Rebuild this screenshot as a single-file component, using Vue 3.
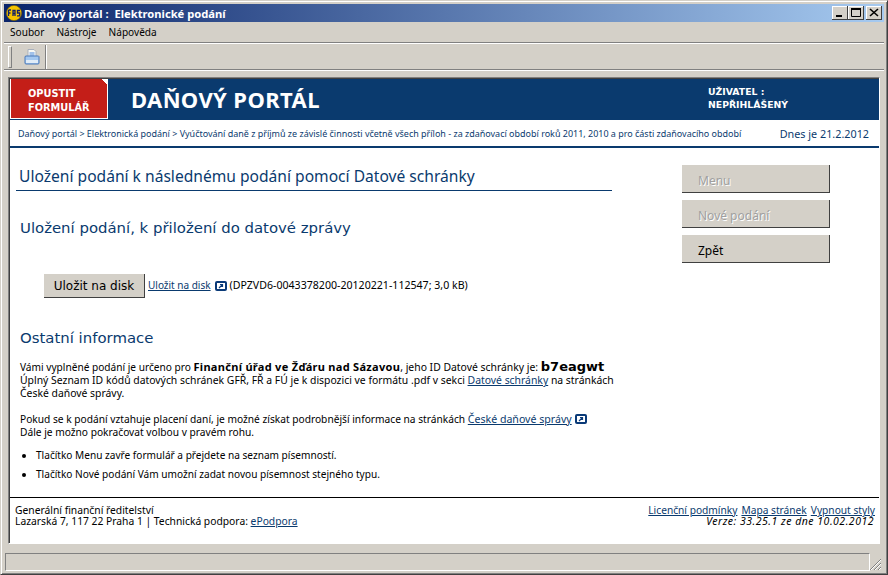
<script setup>
const crumbs = 'Daňový portál > Elektronická podání > Vyúčtování daně z příjmů ze závislé činnosti včetně všech příloh - za zdaňovací období roků 2011, 2010 a pro části zdaňovacího období'
</script>

<template>
  <div class="win">
    <div class="title">
      <div class="title-left">
        <svg class="logo" width="16" height="16" viewBox="0 0 16 16"><circle cx="8" cy="8" r="7.6" fill="#f5c400" stroke="#7a6000" stroke-width=".6"/><path d="M2.500 5v6M2.500 5H5M2.500 8H4.500M7 11V5.500L9 5.500V11M7 8.500H9M14 5.500H11.500V8H13.700V10.800H11" fill="none" stroke="#10206a" stroke-width="1.300"/></svg>
        <span>Daňový portál :&nbsp; Elektronické podání</span>
      </div>
      <div class="ctrls">
        <div class="cb"><svg width="14" height="12" viewBox="0 0 14 12"><rect x="3" y="8" width="6" height="2" fill="#000"/></svg></div>
        <div class="cb"><svg width="14" height="12" viewBox="0 0 14 12"><path d="M2.500 1.500h9v8h-9z" fill="none" stroke="#000"/><rect x="2" y="1" width="10" height="2" fill="#000"/></svg></div>
        <div class="cb close"><svg width="14" height="12" viewBox="0 0 14 12"><path d="M3 2l8 7M11 2l-8 7" stroke="#000" stroke-width="1.600"/></svg></div>
      </div>
    </div>
    <div class="menu"><span>Soubor</span><span>Nástroje</span><span>Nápověda</span></div>
    <div class="toolbar">
      <div class="grip"></div>
      <svg class="printer" width="16" height="16" viewBox="0 0 16 16"><path d="M4 .5h6l2 2v6H4z" fill="#f8f8f4" stroke="#a8b0bc"/><path d="M5.500 4h5M5.500 6h5" stroke="#4a8ae0"/><path d="M1.500 7h13a1 1 0 0 1 .5 1v6a1 1 0 0 1-1 1H2a1 1 0 0 1-1-1V8z" fill="#a4c8f0" stroke="#4a78b8"/><rect x="2" y="11" width="12" height="3" fill="#e0ecf8"/></svg>
      <div class="sep"></div>
    </div>
    <div class="frame">
      <div class="header">
        <div class="exit"><span>OPUSTIT</span><span>FORMULÁŘ</span></div>
        <div class="portal">DAŇOVÝ PORTÁL</div>
        <div class="user"><span>UŽIVATEL :</span><span>NEPŘIHLÁŠENÝ</span></div>
      </div>
      <div class="crumbs">
        <span class="crumb-text">{{ crumbs }}</span>
        <span class="date">Dnes je 21.2.2012</span>
      </div>
      <div class="main">
        <div class="col">
          <h1>Uložení podání k následnému podání pomocí Datové schránky</h1>
          <h2>Uložení podání, k přiložení do datové zprávy</h2>
          <div class="save-row">
            <div class="save-btn">Uložit na disk</div>
            <a class="lnk save-lnk">Uložit na disk</a>
            <svg class="ext" width="12" height="10" viewBox="0 0 12 10"><rect width="12" height="10" rx="2" fill="#0a3a78"/><rect x="2" y="2" width="8" height="6" fill="#fff"/><path d="M4 7l3-3M5 3.500h2.500V6" fill="none" stroke="#0a3a78" stroke-width="1.200"/></svg>
            <span class="fileinfo">(DPZVD6-0043378200-20120221-112547; 3,0 kB)</span>
          </div>
          <h2 class="other">Ostatní informace</h2>
          <p class="p1"><span class="lead">Vámi vyplněné podání je určeno pro </span><b class="office">Finanční úřad ve Žďáru nad Sázavou</b>, jeho ID Datové schránky je: <b class="idbox">b7eagwt</b><br>Úplný Seznam ID kódů datových schránek GFŘ, FŘ a FÚ je k dispozici ve formátu .pdf v sekci <a class="lnk">Datové schránky</a> na stránkách<br>České daňové správy.</p>
          <p class="p2">Pokud se k podání vztahuje placení daní, je možné získat podrobnější informace na stránkách <a class="lnk p2-lnk">České daňové správy</a> <svg class="ext" width="12" height="10" viewBox="0 0 12 10"><rect width="12" height="10" rx="2" fill="#0a3a78"/><rect x="2" y="2" width="8" height="6" fill="#fff"/><path d="M4 7l3-3M5 3.500h2.500V6" fill="none" stroke="#0a3a78" stroke-width="1.200"/></svg><br>Dále je možno pokračovat volbou v pravém rohu.</p>
          <ul>
            <li>Tlačítko Menu zavře formulář a přejdete na seznam písemností.</li>
            <li>Tlačítko Nové podání Vám umožní zadat novou písemnost stejného typu.</li>
          </ul>
        </div>
        <div class="side">
          <div class="sbtn off">Menu</div>
          <div class="sbtn off">Nové podání</div>
          <div class="sbtn">Zpět</div>
        </div>
      </div>
      <div class="footer">
        <div class="f-left">Generální finanční ředitelství<br>Lazarská 7, 117 22 Praha 1 | Technická podpora: <a class="lnk">ePodpora</a></div>
        <div class="f-right">
          <div class="f-links"><a class="lnk">Licenční podmínky</a><a class="lnk">Mapa stránek</a><a class="lnk">Vypnout styly</a></div>
          <div class="ver">Verze: 33.25.1 ze dne 10.02.2012</div>
        </div>
      </div>
    </div>
    <div class="status">
      <div class="status-box"></div>
      <svg class="grip-r" width="13" height="13" viewBox="0 0 13 13"><path d="M12 1L1 12M12 5L5 12M12 9L9 12" stroke="#808080"/><path d="M12 2L2 12M12 6L6 12M12 10L10 12" stroke="#fff"/></svg>
    </div>
  </div>
</template>

<style>
html, body { margin: 0; padding: 0; background: #d4d0c8; overflow: hidden; }
</style>

<style scoped>
.win {
  box-sizing: border-box;
  width: 888px;
  height: 575px;
  background: #d4d0c8;
  border: 1px solid;
  border-color: #d4d0c8 #404040 #404040 #d4d0c8;
  box-shadow: inset 1px 1px 0 #fff, inset -1px -1px 0 #808080;
  padding: 3px;
  font-family: "DejaVu Sans", sans-serif;
  font-size: 10px;
  color: #000;
  display: flex;
  flex-direction: column;
}
.title {
  height: 18px;
  flex: none;
  background: linear-gradient(90deg, #0a246a, #a6caf0);
  display: flex;
  justify-content: space-between;
  align-items: center;
  color: #fff;
  font: bold 11.200px "Noto Sans", sans-serif;
}
.title-left { display: flex; align-items: center; gap: 2px; padding-left: 2px; }
.logo { display: block; }
.ctrls { display: flex; padding-right: 2px; }
.cb {
  width: 16px; height: 14px; box-sizing: border-box;
  background: #d4d0c8;
  box-shadow: inset -1px -1px 0 #404040, inset 1px 1px 0 #fff;
  display: flex; align-items: center; justify-content: center;
}
.cb.close { margin-left: 2px; }
.menu {
  height: 20px; flex: none;
  display: flex; align-items: center;
  gap: 12px; padding-left: 6px;
  font: 10.100px "Noto Sans", sans-serif;
  border-bottom: 1px solid #808080;
  box-shadow: 0 1px 0 #fff;
}
.toolbar {
  height: 26px; flex: none;
  display: flex; align-items: center;
  border-bottom: 1px solid #808080;
  box-shadow: 0 1px 0 #fff;
  box-sizing: border-box;
  margin-top: 1px;
}
.grip { width: 2px; height: 20px; margin-left: 4px; border: 1px solid; border-color: #fff #808080 #808080 #fff; }
.printer { margin-left: 12px; }
.sep { width: 1px; height: 24px; background: #808080; margin-left: 5px; box-shadow: 1px 0 0 #fff; }
.frame {
  margin: 7px 4px 0 4px;
  height: 467px;
  flex: none;
  background: #fff;
  border: 1px solid; border-color: #808080 #fff #fff #808080;
  box-shadow: inset 1px 1px 0 #404040;
  padding: 1px 0 0 1px;
  display: flex;
  flex-direction: column;
  box-sizing: border-box;
}
.header {
  height: 41px; flex: none;
  background: #0a3a6e;
  display: flex;
  position: relative;
}
.exit {
  box-sizing: border-box;
  width: 98px; height: 40px;
  background: linear-gradient(225deg, #fff 0 4px, #c41e18 4px);
  border: 1px solid #fff;
  border-width: 0 1px 1px 1px;
  color: #fff;
  font: bold 9.800px "DejaVu Sans", sans-serif;
  padding: 8px 0 0 17px;
  line-height: 13.500px;
  display: flex; flex-direction: column;
}
.portal {
  margin-left: 23px;
  color: #fff;
  font: bold 22px/41px "Noto Sans", sans-serif;
  letter-spacing: .4px;
}
.user {
  position: absolute; left: 698px; top: 6px;
  color: #fff;
  font: bold 9.300px/13px "DejaVu Sans", sans-serif;
  display: flex; flex-direction: column;
}
.crumbs {
  height: 26px; flex: none;
  display: flex; align-items: center; justify-content: space-between;
  padding: 0 10px 0 8px;
  color: #0a3a6e;
  border-bottom: 2px solid #0a3a6e;
  font-family: "Noto Sans", sans-serif;
}
.crumb-text { font-size: 8.970px; }
.date { font-size: 10.800px; }
.main { flex: 1; display: flex; min-height: 0; }
.col { width: 596px; padding: 16px 0 0 6px; font-family: "Noto Sans", sans-serif; font-size: 10.500px; line-height: 13px; }
h1 {
  margin: 0; font: 15.600px/24px "Noto Sans", sans-serif; color: #0a3a6e;
  border-bottom: 1px solid #0a3a6e;
  padding: 0 0 2px 3px;
  height: 24px;
  white-space: nowrap;
}
h2 {
  margin: 0; font: 14.900px/22px "DejaVu Sans", sans-serif; color: #0a3a6e;
  padding-left: 4px;
  margin-top: 26px;
}
.save-row { display: flex; align-items: center; margin: 34px 0 0 28px; gap: 3px; height: 25px; }
.save-btn {
  width: 101px; height: 24px; box-sizing: border-box;
  background: #d4d0c8;
  border-right: 1px solid #404040; border-bottom: 1px solid #404040;
  font: 12px/24px "DejaVu Sans", sans-serif;
  text-align: center;
}
.lnk { color: #0a3a6e; text-decoration: underline; }
.save-lnk { font-size: 10px; }
.fileinfo { margin-left: -1px; font-size: 10.600px; }
.ext { vertical-align: -1px; margin: 0 1px; }
.other { margin-top: 29px; }
p { margin: 11px 0 0 4px; white-space: nowrap; }
.p1 { font-size: 10.400px; }
.lead { font-size: 10.150px; }
.office { font-size: 11px; letter-spacing: .3px; }
.idbox { font: bold 13px/14px "DejaVu Sans", sans-serif; }
.p2 { margin-top: 13px; font-size: 10.200px; }
.p2-lnk { font-size: 10.600px; }
ul { margin: 10px 0 0 4px; padding: 0 0 0 16px; font-size: 10.100px; }
li { margin-bottom: 6px; }
.side { margin-left: 70px; padding-top: 17px; display: flex; flex-direction: column; gap: 7px; }
.sbtn {
  box-sizing: border-box; width: 148px; height: 28px;
  background: #d4d0c8;
  border-right: 1px solid #404040; border-bottom: 1px solid #404040;
  padding-left: 16px;
  font: 12px/31px "Noto Sans", sans-serif;
}
.sbtn.off { color: #a0a0a0; text-shadow: 1px 1px 0 #fff; }
.footer {
  height: 46px; flex: none;
  border-top: 1px solid #000;
  box-sizing: border-box;
  display: flex; justify-content: space-between;
  padding: 7px 4px 0 5px;
  font: 10.300px/11px "Noto Sans", sans-serif;
}
.f-links { display: flex; gap: 4px; justify-content: flex-end; font-size: 10.200px; }
.ver { font-style: italic; text-align: right; padding-right: 1px; font-size: 10.500px; letter-spacing: .5px; }
.status { height: 23px; flex: none; margin-top: 7px; display: flex; position: relative; }
.status-box { width: 865px; height: 18px; margin: 2px 0 0 1px; box-sizing: border-box; border: 1px solid; border-color: #808080 #fff #fff #808080; }
.grip-r { position: absolute; right: 2px; bottom: 3px; }
</style>
